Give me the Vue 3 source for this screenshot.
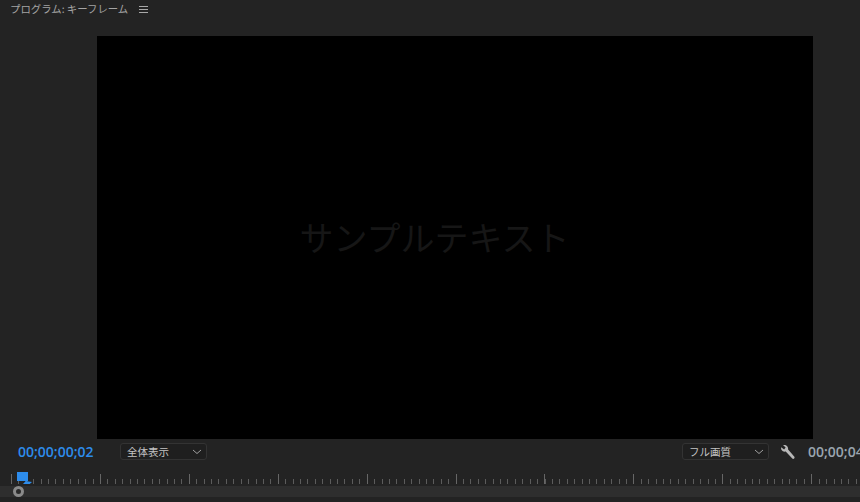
<script setup>
const minors = Array.from({ length: 115 }, (_, i) => Math.round(11 + i * 7.41) + 0.5)
const majors = Array.from({ length: 10 }, (_, i) => Math.round(11 + i * 88.9) + 0.5)
</script>

<template>
  <div class="panel">
    <header class="head">
      <span class="title">プログラム: キーフレーム</span>
      <svg class="menu" width="9" height="7" viewBox="0 0 9 7"><path d="M0 .5h9M0 3.500h9M0 6.500h9" stroke="#a8a8a8" stroke-width="1" fill="none"/></svg>
    </header>
    <div class="stage-wrap">
      <div class="stage"><span class="sample">サンプルテキスト</span></div>
    </div>
    <div class="controls">
      <span class="tc cur">00;00;00;02</span>
      <div class="select fit"><span>全体表示</span><svg width="10" height="6" viewBox="0 0 10 6"><path d="M1 1l4 3.500L9 1" stroke="#a0a0a0" fill="none"/></svg></div>
      <div class="select qual"><span>フル画質</span><svg width="10" height="6" viewBox="0 0 10 6"><path d="M1 1l4 3.500L9 1" stroke="#a0a0a0" fill="none"/></svg></div>
      <svg class="wrench" width="16" height="16" viewBox="0 0 16 16"><path d="M3 1.100 5.600 3.400 4.100 5.400 1.200 3.300C.6 6.100 2.900 8.300 5.700 7.500L12.300 14.600c1 1 2.900-.4 2.100-1.800L8.100 5.400C8.500 2.500 6 .3 3 1.100z" fill="#b8b8b8"/></svg>
      <span class="tc end">00;00;04</span>
    </div>
    <div class="ruler">
      <svg class="ticks" width="860" height="22" viewBox="0 0 860 22">
        <line v-for="x in minors" :key="'m' + x" :x1="x" :x2="x" y1="15" y2="20" stroke="#5c5c5c" />
        <line v-for="x in majors" :key="'M' + x" :x1="x" :x2="x" y1="10" y2="20" stroke="#666" />
      </svg>
      <div class="playhead"><i class="cap"></i><i class="foot"></i></div>
    </div>
    <div class="scroll"><i class="knob"></i></div>
  </div>
</template>

<style>
html, body { margin: 0; background: #232323; }
</style>

<style scoped>
.panel { width: 860px; height: 502px; background: #232323; display: flex; flex-direction: column; overflow: hidden; font-family: "Noto Sans CJK JP", "Noto Sans", sans-serif; }
.head { height: 36px; flex: none; display: flex; align-items: flex-start; gap: 11px; padding: 1px 0 0 10px; box-sizing: border-box; }
.title { font-size: 10.400px; line-height: 16px; color: #a4a4a4; }
.menu { margin-top: 5px; }
.stage-wrap { flex: none; height: 403px; padding-left: 97px; }
.stage { width: 716px; height: 403px; background: #000; display: flex; align-items: center; justify-content: center; padding-right: 41px; box-sizing: border-box; }
.sample { font-size: 34px; line-height: 40px; color: #161616; font-weight: 400; margin-top: -2px; }
.controls { height: 25px; flex: none; display: flex; align-items: center; padding-left: 18px; white-space: nowrap; }
.tc { font-family: "Open Sans", "Liberation Sans", sans-serif; font-size: 14px; font-weight: 600; flex: none; }
.cur { color: #2d8ceb; width: 102px; }
.end { color: #9aa5b0; width: 52px; margin-left: 12px; }
.select { height: 17px; box-sizing: border-box; border: 1px solid #333; background: #1f1f1f; border-radius: 3px; display: flex; align-items: center; justify-content: space-between; color: #c4c4c4; font-size: 10.500px; padding: 0 4px 0 6px; flex: none; }
.fit { width: 87px; }
.qual { width: 87px; margin-left: auto; }
.wrench { margin-left: 11px; flex: none; }
.ruler { position: relative; height: 22px; flex: none; }
.ticks { display: block; }
.playhead { position: absolute; left: 17px; top: 8px; }
.cap { position: absolute; left: 0; top: 0; width: 11px; height: 9px; background: #2d8ceb; }
.foot { position: absolute; left: 6px; top: 9px; width: 9px; height: 3px; background: #2d8ceb; clip-path: polygon(30% 0, 100% 30%, 75% 100%, 0 100%); }
.scroll { flex: 1; margin-bottom: 5px; background: #2e2e2e; display: flex; align-items: center; padding-left: 13px; }
.knob { width: 5px; height: 5px; border: 3px solid #8a8a8a; border-radius: 50%; background: #2a2a2a; }
</style>
